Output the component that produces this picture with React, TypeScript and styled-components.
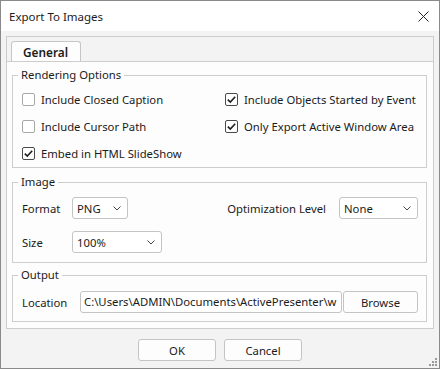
import React from 'react'
import styled, { createGlobalStyle } from 'styled-components'

const GlobalStyle = createGlobalStyle`
  html, body {
    margin: 0;
    padding: 0;
    background: #ffffff;
  }
  body {
    font-family: "Noto Sans", "Open Sans", sans-serif;
    font-size: 11.3px;
    color: #1b1b1b;
  }
`

const Window = styled.div`
  position: relative;
  width: 440px;
  height: 369px;
  box-sizing: border-box;
  border: 1px solid #8a8a8a;
  background: #f3f3f3;
  display: flex;
  flex-direction: column;
`

const TitleBar = styled.div`
  height: 30px;
  flex: none;
  background: #ffffff;
  display: flex;
  align-items: center;
  justify-content: space-between;
  padding: 0 10px 0 8px;
`

const Title = styled.span`
  font-size: 11.5px;
  color: #1b1b1b;
`

const Body = styled.div`
  flex: 1;
  display: flex;
  flex-direction: column;
  padding: 5px 5px 0 5px;
`

const TabFrame = styled.div`
  border: 1px solid #cdcdcd;
  display: flex;
  flex-direction: column;
`

const TabRow = styled.div`
  display: flex;
  padding: 4px 0 0 4px;
  height: 20px;
  border-bottom: 1px solid #cdcdcd;
`

const Tab = styled.div`
  height: 20px;
  margin-bottom: -1px;
  padding: 0 11px;
  width: 70px;
  box-sizing: border-box;
  border: 1px solid #c6c6c6;
  border-bottom: none;
  border-radius: 3px 3px 0 0;
  background: #fdfdfd;
  font-weight: 600;
  font-size: 11.8px;
  line-height: 20px;
`

const Pane = styled.div`
  background: #fdfdfd;
  padding: 5px 6px 6px 5px;
  display: flex;
  flex-direction: column;
`

const Group = styled.fieldset<{ $gap: number; $top: number; $bottom: number }>`
  margin: ${(p) => p.$gap}px 0 0 0;
  padding: ${(p) => p.$top}px 8px ${(p) => p.$bottom}px 9px;
  border: 1px solid #cdcdcd;
  min-width: 0;
`

const Legend = styled.legend`
  margin-left: -4px;
  padding: 0 3px;
  line-height: 16px;
  height: 16px;
`

const CheckGrid = styled.div`
  display: grid;
  grid-template-columns: 203px 1fr;
  grid-auto-rows: 27px;
`

const CheckRow = styled.label`
  display: flex;
  align-items: center;
  gap: 6px;
  white-space: nowrap;
`

const Box = styled.span<{ $checked: boolean }>`
  width: 13px;
  height: 13px;
  box-sizing: border-box;
  border: 1px solid ${(p) => (p.$checked ? '#4a4a4a' : '#a8a8a8')};
  border-radius: 2px;
  background: #ffffff;
  display: flex;
  align-items: center;
  justify-content: center;
`

const FormRow = styled.div<{ $mt?: number }>`
  display: flex;
  align-items: center;
  justify-content: space-between;
  margin-top: ${(p) => p.$mt ?? 0}px;
`

const Pair = styled.div`
  display: flex;
  align-items: center;
`

const FieldLabel = styled.span<{ $w?: number }>`
  width: ${(p) => (p.$w ? `${p.$w}px` : 'auto')};
  margin-right: ${(p) => (p.$w ? 0 : 13)}px;
  white-space: nowrap;
`

const SelectBox = styled.div<{ $w: number }>`
  width: ${(p) => p.$w}px;
  height: 22px;
  box-sizing: border-box;
  border: 1px solid #c4c4c4;
  border-radius: 3px;
  background: #ffffff;
  display: flex;
  align-items: center;
  justify-content: space-between;
  padding: 0 6px 0 4px;
`

const TextBox = styled.div`
  width: 262px;
  height: 22px;
  box-sizing: border-box;
  border: 1px solid #c4c4c4;
  border-radius: 3px;
  background: #ffffff;
  padding: 0 3px;
  line-height: 20px;
  white-space: nowrap;
  overflow: hidden;
`

const Button = styled.div<{ $w: number }>`
  width: ${(p) => p.$w}px;
  height: 22px;
  box-sizing: border-box;
  border: 1px solid #c4c4c4;
  border-radius: 3px;
  background: #fdfdfd;
  display: flex;
  align-items: center;
  justify-content: center;
`

const Footer = styled.div`
  flex: 1;
  display: flex;
  justify-content: center;
  gap: 8px;
  padding-top: 10px;
`

const Grip = styled.svg`
  position: absolute;
  right: 2px;
  bottom: 2px;
`

const Chevron = () => (
  <svg width="8" height="5" viewBox="0 0 8 5">
    <path d="M0.5 0.5 L4 4 L7.5 0.5" fill="none" stroke="#444" strokeWidth="1" />
  </svg>
)

const CheckBox: React.FC<{ checked?: boolean; label: string }> = ({ checked = false, label }) => (
  <CheckRow>
    <Box $checked={checked}>
      {checked && (
        <svg width="11" height="11" viewBox="0 0 11 11">
          <path d="M1.8 5.6 L4.3 8 L9.2 2.8" fill="none" stroke="#1f1f1f" strokeWidth="1.6" />
        </svg>
      )}
    </Box>
    {label}
  </CheckRow>
)

const Select: React.FC<{ value: string; width: number }> = ({ value, width }) => (
  <SelectBox $w={width}>
    <span>{value}</span>
    <Chevron />
  </SelectBox>
)

export default function App() {
  return (
    <>
      <GlobalStyle />
      <Window>
        <TitleBar>
          <Title>Export To Images</Title>
          <svg width="11" height="11" viewBox="0 0 11 11">
            <path d="M0.5 0.5 L10.5 10.5 M10.5 0.5 L0.5 10.5" stroke="#222" strokeWidth="1" />
          </svg>
        </TitleBar>
        <Body>
          <TabFrame>
            <TabRow>
              <Tab>General</Tab>
            </TabRow>
            <Pane>
              <Group $gap={0} $top={3} $bottom={0}>
                <Legend>Rendering Options</Legend>
                <CheckGrid>
                  <CheckBox label="Include Closed Caption" />
                  <CheckBox checked label="Include Objects Started by Event" />
                  <CheckBox label="Include Cursor Path" />
                  <CheckBox checked label="Only Export Active Window Area" />
                  <CheckBox checked label="Embed in HTML SlideShow" />
                </CheckGrid>
              </Group>
              <Group $gap={6} $top={7} $bottom={9}>
                <Legend>Image</Legend>
                <FormRow>
                  <Pair>
                    <FieldLabel $w={50}>Format</FieldLabel>
                    <Select value="PNG" width={56} />
                  </Pair>
                  <Pair>
                    <FieldLabel>Optimization Level</FieldLabel>
                    <Select value="None" width={79} />
                  </Pair>
                </FormRow>
                <FormRow $mt={12}>
                  <Pair>
                    <FieldLabel $w={50}>Size</FieldLabel>
                    <Select value="100%" width={90} />
                  </Pair>
                </FormRow>
              </Group>
              <Group $gap={4} $top={8} $bottom={8}>
                <Legend>Output</Legend>
                <FormRow>
                  <Pair>
                    <FieldLabel $w={58}>Location</FieldLabel>
                    <TextBox>C:\Users\ADMIN\Documents\ActivePresenter\w</TextBox>
                  </Pair>
                  <Button $w={75}>Browse</Button>
                </FormRow>
              </Group>
            </Pane>
          </TabFrame>
          <Footer>
            <Button $w={78}>OK</Button>
            <Button $w={78}>Cancel</Button>
          </Footer>
        </Body>
        <Grip width="8" height="8" viewBox="0 0 8 8">
          <g fill="#9a9a9a">
            <rect x="6" y="0" width="2" height="2" />
            <rect x="3" y="3" width="2" height="2" />
            <rect x="6" y="3" width="2" height="2" />
            <rect x="0" y="6" width="2" height="2" />
            <rect x="3" y="6" width="2" height="2" />
            <rect x="6" y="6" width="2" height="2" />
          </g>
        </Grip>
      </Window>
    </>
  )
}
